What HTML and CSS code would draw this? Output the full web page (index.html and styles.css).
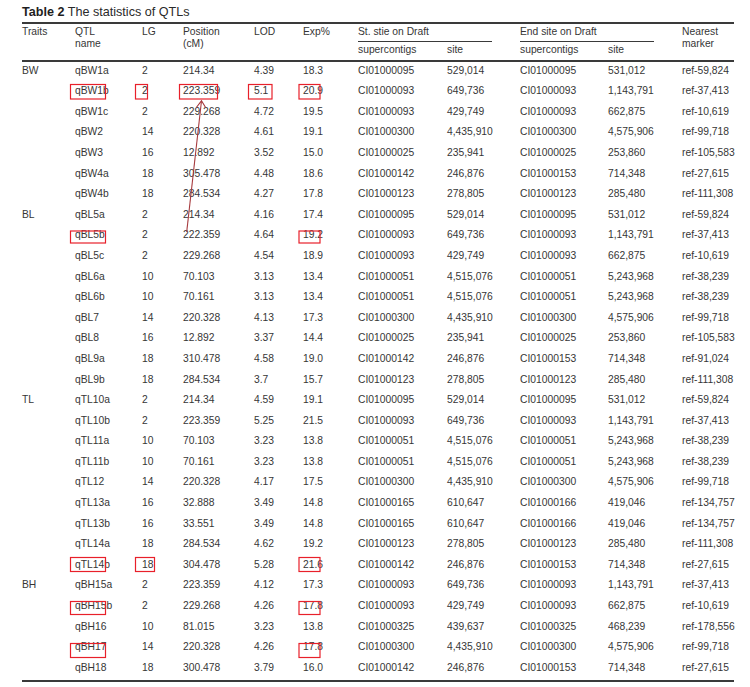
FILE: index.html
```html
<!DOCTYPE html>
<html lang="en">
<head>
<meta charset="utf-8">
<title>Table 2 The statistics of QTLs</title>
<link rel="stylesheet" href="styles.css">
</head>
<body>
<div class="page">
  <div class="sheet">
    <p class="caption"><b>Table 2</b> The statistics of QTLs</p>
    <table class="qtl">
      <colgroup>
        <col class="c-trait"><col class="c-name"><col class="c-lg"><col class="c-pos"><col class="c-lod"><col class="c-exp">
        <col class="c-ssup"><col class="c-ssite"><col class="c-esup"><col class="c-esite"><col class="c-mark">
      </colgroup>
      <thead>
        <tr class="h1">
          <th rowspan="2">Traits</th>
          <th rowspan="2">QTL<br>name</th>
          <th rowspan="2">LG</th>
          <th rowspan="2">Position<br>(cM)</th>
          <th rowspan="2">LOD</th>
          <th rowspan="2">Exp%</th>
          <th colspan="2" class="grp"><span>St. stie on Draft</span></th>
          <th colspan="2" class="grp"><span>End site on Draft</span></th>
          <th rowspan="2">Nearest<br>marker</th>
        </tr>
        <tr class="h2">
          <th>supercontigs</th><th>site</th><th>supercontigs</th><th>site</th>
        </tr>
      </thead>
      <tbody>
        <tr><td>BW</td><td>qBW1a</td><td>2</td><td>214.34</td><td>4.39</td><td>18.3</td><td>CI01000095</td><td>529,014</td><td>CI01000095</td><td>531,012</td><td>ref-59,824</td></tr>
        <tr><td></td><td>qBW1b</td><td>2</td><td>223.359</td><td>5.1</td><td>20.9</td><td>CI01000093</td><td>649,736</td><td>CI01000093</td><td>1,143,791</td><td>ref-37,413</td></tr>
        <tr><td></td><td>qBW1c</td><td>2</td><td>229.268</td><td>4.72</td><td>19.5</td><td>CI01000093</td><td>429,749</td><td>CI01000093</td><td>662,875</td><td>ref-10,619</td></tr>
        <tr><td></td><td>qBW2</td><td>14</td><td>220.328</td><td>4.61</td><td>19.1</td><td>CI01000300</td><td>4,435,910</td><td>CI01000300</td><td>4,575,906</td><td>ref-99,718</td></tr>
        <tr><td></td><td>qBW3</td><td>16</td><td>12.892</td><td>3.52</td><td>15.0</td><td>CI01000025</td><td>235,941</td><td>CI01000025</td><td>253,860</td><td>ref-105,583</td></tr>
        <tr><td></td><td>qBW4a</td><td>18</td><td>305.478</td><td>4.48</td><td>18.6</td><td>CI01000142</td><td>246,876</td><td>CI01000153</td><td>714,348</td><td>ref-27,615</td></tr>
        <tr><td></td><td>qBW4b</td><td>18</td><td>284.534</td><td>4.27</td><td>17.8</td><td>CI01000123</td><td>278,805</td><td>CI01000123</td><td>285,480</td><td>ref-111,308</td></tr>
        <tr><td>BL</td><td>qBL5a</td><td>2</td><td>214.34</td><td>4.16</td><td>17.4</td><td>CI01000095</td><td>529,014</td><td>CI01000095</td><td>531,012</td><td>ref-59,824</td></tr>
        <tr><td></td><td>qBL5b</td><td>2</td><td>222.359</td><td>4.64</td><td>19.2</td><td>CI01000093</td><td>649,736</td><td>CI01000093</td><td>1,143,791</td><td>ref-37,413</td></tr>
        <tr><td></td><td>qBL5c</td><td>2</td><td>229.268</td><td>4.54</td><td>18.9</td><td>CI01000093</td><td>429,749</td><td>CI01000093</td><td>662,875</td><td>ref-10,619</td></tr>
        <tr><td></td><td>qBL6a</td><td>10</td><td>70.103</td><td>3.13</td><td>13.4</td><td>CI01000051</td><td>4,515,076</td><td>CI01000051</td><td>5,243,968</td><td>ref-38,239</td></tr>
        <tr><td></td><td>qBL6b</td><td>10</td><td>70.161</td><td>3.13</td><td>13.4</td><td>CI01000051</td><td>4,515,076</td><td>CI01000051</td><td>5,243,968</td><td>ref-38,239</td></tr>
        <tr><td></td><td>qBL7</td><td>14</td><td>220.328</td><td>4.13</td><td>17.3</td><td>CI01000300</td><td>4,435,910</td><td>CI01000300</td><td>4,575,906</td><td>ref-99,718</td></tr>
        <tr><td></td><td>qBL8</td><td>16</td><td>12.892</td><td>3.37</td><td>14.4</td><td>CI01000025</td><td>235,941</td><td>CI01000025</td><td>253,860</td><td>ref-105,583</td></tr>
        <tr><td></td><td>qBL9a</td><td>18</td><td>310.478</td><td>4.58</td><td>19.0</td><td>CI01000142</td><td>246,876</td><td>CI01000153</td><td>714,348</td><td>ref-91,024</td></tr>
        <tr><td></td><td>qBL9b</td><td>18</td><td>284.534</td><td>3.7</td><td>15.7</td><td>CI01000123</td><td>278,805</td><td>CI01000123</td><td>285,480</td><td>ref-111,308</td></tr>
        <tr><td>TL</td><td>qTL10a</td><td>2</td><td>214.34</td><td>4.59</td><td>19.1</td><td>CI01000095</td><td>529,014</td><td>CI01000095</td><td>531,012</td><td>ref-59,824</td></tr>
        <tr><td></td><td>qTL10b</td><td>2</td><td>223.359</td><td>5.25</td><td>21.5</td><td>CI01000093</td><td>649,736</td><td>CI01000093</td><td>1,143,791</td><td>ref-37,413</td></tr>
        <tr><td></td><td>qTL11a</td><td>10</td><td>70.103</td><td>3.23</td><td>13.8</td><td>CI01000051</td><td>4,515,076</td><td>CI01000051</td><td>5,243,968</td><td>ref-38,239</td></tr>
        <tr><td></td><td>qTL11b</td><td>10</td><td>70.161</td><td>3.23</td><td>13.8</td><td>CI01000051</td><td>4,515,076</td><td>CI01000051</td><td>5,243,968</td><td>ref-38,239</td></tr>
        <tr><td></td><td>qTL12</td><td>14</td><td>220.328</td><td>4.17</td><td>17.5</td><td>CI01000300</td><td>4,435,910</td><td>CI01000300</td><td>4,575,906</td><td>ref-99,718</td></tr>
        <tr><td></td><td>qTL13a</td><td>16</td><td>32.888</td><td>3.49</td><td>14.8</td><td>CI01000165</td><td>610,647</td><td>CI01000166</td><td>419,046</td><td>ref-134,757</td></tr>
        <tr><td></td><td>qTL13b</td><td>16</td><td>33.551</td><td>3.49</td><td>14.8</td><td>CI01000165</td><td>610,647</td><td>CI01000166</td><td>419,046</td><td>ref-134,757</td></tr>
        <tr><td></td><td>qTL14a</td><td>18</td><td>284.534</td><td>4.62</td><td>19.2</td><td>CI01000123</td><td>278,805</td><td>CI01000123</td><td>285,480</td><td>ref-111,308</td></tr>
        <tr><td></td><td>qTL14b</td><td>18</td><td>304.478</td><td>5.28</td><td>21.6</td><td>CI01000142</td><td>246,876</td><td>CI01000153</td><td>714,348</td><td>ref-27,615</td></tr>
        <tr><td>BH</td><td>qBH15a</td><td>2</td><td>223.359</td><td>4.12</td><td>17.3</td><td>CI01000093</td><td>649,736</td><td>CI01000093</td><td>1,143,791</td><td>ref-37,413</td></tr>
        <tr><td></td><td>qBH15b</td><td>2</td><td>229.268</td><td>4.26</td><td>17.8</td><td>CI01000093</td><td>429,749</td><td>CI01000093</td><td>662,875</td><td>ref-10,619</td></tr>
        <tr><td></td><td>qBH16</td><td>10</td><td>81.015</td><td>3.23</td><td>13.8</td><td>CI01000325</td><td>439,637</td><td>CI01000325</td><td>468,239</td><td>ref-178,556</td></tr>
        <tr><td></td><td>qBH17</td><td>14</td><td>220.328</td><td>4.26</td><td>17.8</td><td>CI01000300</td><td>4,435,910</td><td>CI01000300</td><td>4,575,906</td><td>ref-99,718</td></tr>
        <tr><td></td><td>qBH18</td><td>18</td><td>300.478</td><td>3.79</td><td>16.0</td><td>CI01000142</td><td>246,876</td><td>CI01000153</td><td>714,348</td><td>ref-27,615</td></tr>
      </tbody>
    </table>
  </div>
  <svg class="marks" width="750" height="687" viewBox="0 0 750 687" aria-hidden="true">
    <g class="box">
      <rect x="70.5" y="84.5" width="35" height="14.5"/>
      <rect x="135.5" y="84.5" width="12" height="14.5"/>
      <rect x="179.5" y="84.5" width="38" height="14.5"/>
      <rect x="248.5" y="84.5" width="23.5" height="14.5"/>
      <rect x="299" y="84.5" width="21" height="14.5"/>
      <rect x="70.5" y="231" width="35" height="12"/>
      <rect x="299" y="231" width="21" height="12"/>
      <rect x="70.5" y="557.5" width="35" height="14"/>
      <rect x="135.5" y="557.5" width="19" height="14"/>
      <rect x="299" y="557.5" width="21" height="14"/>
      <rect x="70.5" y="601.5" width="35" height="13"/>
      <rect x="299" y="601.5" width="21" height="13"/>
      <rect x="70.5" y="643.5" width="35" height="14"/>
      <rect x="299" y="643.5" width="21" height="14"/>
    </g>
    <g class="arrow">
      <line x1="186.7" y1="232" x2="201.5" y2="100.8"/>
      <polyline points="196.3,107.5 201.5,100.8 205.6,107.5"/>
    </g>
  </svg>
</div>
</body>
</html>
```

FILE: styles.css
```css
html, body {
  margin: 0;
  padding: 0;
  background: #ffffff;
}

.page {
  position: relative;
  width: 750px;
  height: 687px;
  overflow: hidden;
  font-family: "Liberation Sans", Arial, sans-serif;
  color: #363636;
}

.sheet {
  padding: 4px 16px 0 22px;
}

.caption {
  margin: 0 0 2px;
  font-size: 12.6px;
  line-height: 16px;
  color: #2a2a2a;
}

.caption b {
  font-weight: bold;
  color: #1e1e1e;
}

.qtl {
  border-collapse: collapse;
  table-layout: fixed;
  width: 712px;
  font-size: 10.3px;
  border-top: 2px solid #3a3a3a;
  border-bottom: 2px solid #3a3a3a;
}

.c-trait { width: 53px; }
.c-name  { width: 67px; }
.c-lg    { width: 41px; }
.c-pos   { width: 71px; }
.c-lod   { width: 49px; }
.c-exp   { width: 55px; }
.c-ssup  { width: 89px; }
.c-ssite { width: 73px; }
.c-esup  { width: 88px; }
.c-esite { width: 74px; }
.c-mark  { width: 52px; }

.qtl thead {
  border-bottom: 2px solid #3a3a3a;
}

.qtl th {
  font-weight: normal;
  text-align: left;
  vertical-align: top;
  padding: 0;
  line-height: 12.5px;
  white-space: nowrap;
}

.qtl .h1 th {
  padding-top: 1.8px;
}

.qtl .grp span {
  display: block;
  margin-right: 28px;
  padding-bottom: 2.5px;
  border-bottom: 1.5px solid #3a3a3a;
}

.qtl .h2 th {
  padding-top: 2.5px;
  padding-bottom: 3.3px;
}

.qtl td {
  padding: 1.5px 0 6.1px;
  line-height: 13px;
  vertical-align: top;
  white-space: nowrap;
}

.marks {
  position: absolute;
  left: 0;
  top: 0;
  pointer-events: none;
}

.marks .box rect {
  fill: none;
  stroke: #e8202a;
  stroke-width: 1.2;
}

.marks .arrow line,
.marks .arrow polyline {
  fill: none;
  stroke: #a63a3e;
  stroke-width: 1.1;
}
```
